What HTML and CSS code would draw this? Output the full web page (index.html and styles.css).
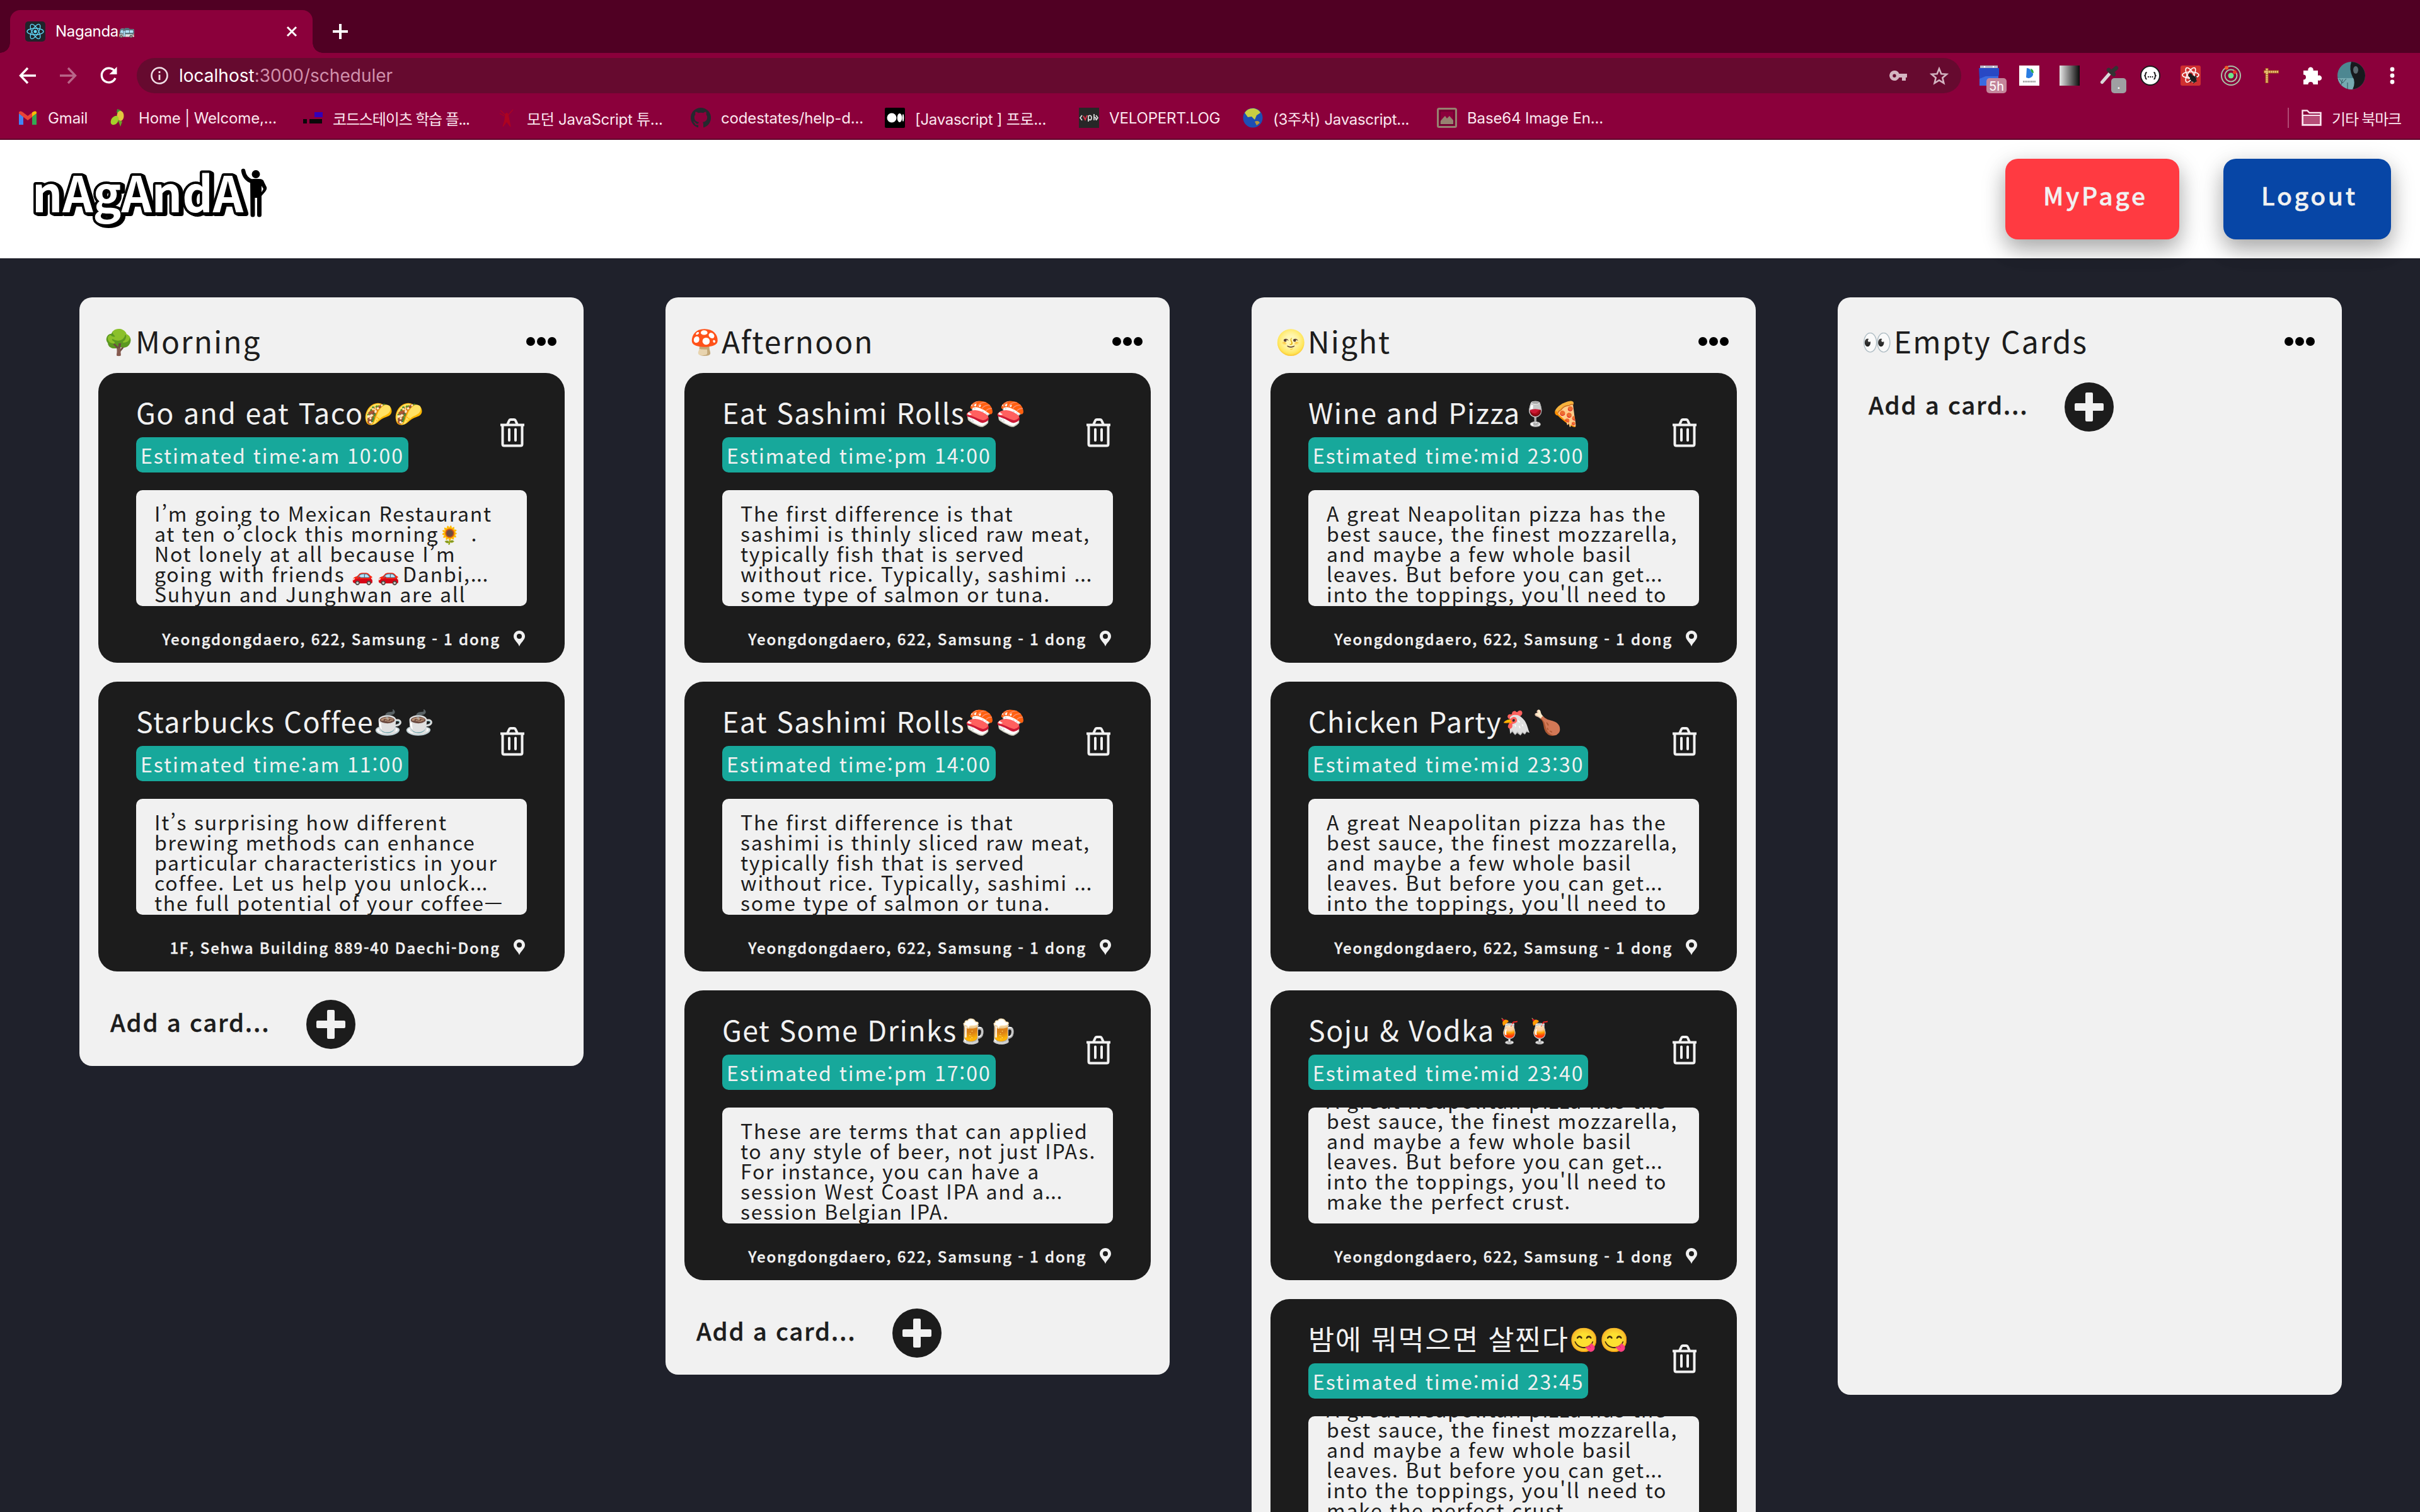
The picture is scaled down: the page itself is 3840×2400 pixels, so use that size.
FILE: index.html
```html
<!DOCTYPE html>
<html lang="ko">
<head>
<meta charset="utf-8">
<title>Naganda</title>
<link rel="stylesheet" href="styles.css">
</head>
<body>
<svg class="defs" width="0" height="0" aria-hidden="true">
  <symbol id="trash" viewBox="0 0 40 46">
    <path d="M1 10.500H39M12 10 15 3.500Q15.600 2 17 2H23Q24.400 2 25 3.500L28 10" fill="none" stroke="currentColor" stroke-width="4"/>
    <path d="M4.500 11V41Q4.500 43.500 7 43.500H33Q35.500 43.500 35.500 41V11M15 17.500V35M25 17.500V35" fill="none" stroke="currentColor" stroke-width="4" stroke-linecap="round"/>
  </symbol>
  <symbol id="pin" viewBox="0 0 18 25">
    <path fill="currentColor" fill-rule="evenodd" d="M9 0C4 0 0 4 0 9c0 6 7 10 9 16 2-6 9-10 9-16 0-5-4-9-9-9Zm0 5a4 4 0 1 1 0 8 4 4 0 0 1 0-8Z"/>
  </symbol>
  <symbol id="dots" viewBox="0 0 48 14">
    <circle cx="7" cy="7" r="7"/><circle cx="24" cy="7" r="7"/><circle cx="41" cy="7" r="7"/>
  </symbol>
  <symbol id="plus" viewBox="0 0 78 78">
    <circle cx="39" cy="39" r="39" fill="#1c1c1c"/>
    <path d="M35 16h8q2 0 2 2v15h15q2 0 2 2v8q0 2-2 2H45v15q0 2-2 2h-8q-2 0-2-2V45H18q-2 0-2-2v-8q0-2 2-2h15V18q0-2 2-2Z" fill="#f1f1f1"/>
  </symbol>
</svg>

<div class="tabstrip">
  <div class="tab">
    <svg class="tab-icon" viewBox="0 0 32 32"><rect width="32" height="32" rx="5" fill="#20232a"/><g fill="none" stroke="#61dafb" stroke-width="1.300"><ellipse cx="16" cy="16" rx="13" ry="5"/><ellipse cx="16" cy="16" rx="13" ry="5" transform="rotate(60 16 16)"/><ellipse cx="16" cy="16" rx="13" ry="5" transform="rotate(120 16 16)"/></g><circle cx="16" cy="16" r="2.500" fill="#61dafb"/></svg>
    <span class="tab-title">Naganda<span class="tab-emoji">🚌</span></span>
    <svg class="tab-close" viewBox="0 0 18 18"><path d="M2 2 16 16M16 2 2 16" stroke="#fff" stroke-width="3"/></svg>
  </div>
  <svg class="tab-new" viewBox="0 0 24 24"><path d="M12 0V24M0 12H24" stroke="#fff" stroke-width="4"/></svg>
</div>

<div class="toolbar">
  <svg class="nav" viewBox="0 0 28 28"><path d="M27 14H3M14 2 2.500 14 14 26" fill="none" stroke="#fff" stroke-width="3.400"/></svg>
  <svg class="nav nav-off" viewBox="0 0 28 28"><path d="M1 14H25M14 2 25.500 14 14 26" fill="none" stroke="#fff" stroke-width="3.400"/></svg>
  <svg class="nav" viewBox="0 0 28 28"><path d="M23.500 6.500A11.300 11.300 0 1 0 25 18" fill="none" stroke="#fff" stroke-width="3.400"/><path d="M27.500 0V12H15.500Z" fill="#fff"/></svg>
  <div class="omnibox">
    <svg class="info" viewBox="0 0 28 28"><circle cx="14" cy="14" r="12.500" fill="none" stroke="#f0dfe6" stroke-width="2.600"/><path d="M14 12.500V21M14 7V10" stroke="#f0dfe6" stroke-width="2.800"/></svg>
    <span class="url"><b>localhost</b>:3000/scheduler</span>
    <svg class="key" viewBox="0 0 28 18"><path fill="#d3b5c1" fill-rule="evenodd" d="M8 1a8 8 0 1 0 7.500 11H20v5h6v-5h2V6H15.500A8 8 0 0 0 8 1Zm0 5.500a2.700 2.700 0 1 1 0 5.400 2.700 2.700 0 0 1 0-5.400Z"/></svg>
    <svg class="star" viewBox="0 0 30 29"><path d="M15 3 18.300 11.200 27 11.800 20.300 17.500 22.400 26 15 21.400 7.600 26 9.700 17.500 3 11.800 11.700 11.200Z" fill="none" stroke="#d3b5c1" stroke-width="2.600"/></svg>
  </div>
  <div class="extensions">
    <div class="ext"><svg viewBox="0 0 32 32"><path d="M1 32V4h30v28Z" fill="#3a6ae0"/><path d="M0 4h32v10q0 3-3 3H11L1 21Z" fill="#2848c4"/><path d="M2 0h28v4H2Z" fill="#b7bac8"/><circle cx="9" cy="2" r="1.200" fill="#fff"/><circle cx="23" cy="2" r="1.200" fill="#fff"/></svg><span class="badge">5h</span></div>
    <div class="ext"><svg viewBox="0 0 32 32"><path d="M0 0h32v32H0Z" fill="#fff"/><path d="M12 4q6 0 7 6 5 2 2 7-4 5-10 2Z" fill="#2a7de1"/><path d="M18 5q5 1 5 7-5 0-5-7Z" fill="#2bab45"/><path d="M6 25.500H26" stroke="#9a9a9a" stroke-width="2.500" stroke-dasharray="2 .6"/></svg></div>
    <div class="ext ext-gradient"></div>
    <div class="ext"><svg viewBox="0 0 32 32"><path d="M3.500 26.500 17 11" stroke="#d9d9d9" stroke-width="5" stroke-linecap="round"/><path d="M14 7 22 14M19 10 26 4" stroke="#333" stroke-width="6.500" stroke-linecap="round"/></svg><span class="badge badge-dot">.</span></div>
    <div class="ext"><svg viewBox="0 0 32 32"><circle cx="16" cy="16" r="15" fill="#fff" stroke="#1c1c1c" stroke-width="2"/><path d="M10.500 11Q8.500 11 8.500 13.500T6.500 16.200Q8.500 16.500 8.500 19T10.500 21.500M21.500 11Q23.500 11 23.500 13.500T25.500 16.200Q23.500 16.500 23.500 19T21.500 21.500" fill="none" stroke="#111" stroke-width="1.800"/><path d="M12 18H20.500" stroke="#111" stroke-width="1.800" stroke-dasharray="1.800 1.500"/></svg></div>
    <div class="ext"><svg viewBox="0 0 32 32"><rect width="32" height="32" rx="3" fill="#cf3030"/><g fill="none" stroke="#fff" stroke-width="1.600"><ellipse cx="16" cy="15" rx="13" ry="5"/><ellipse cx="16" cy="15" rx="13" ry="5" transform="rotate(60 16 15)"/><ellipse cx="16" cy="15" rx="13" ry="5" transform="rotate(120 16 15)"/></g><ellipse cx="20" cy="21" rx="4.500" ry="6" fill="#1c1c1c" transform="rotate(-35 20 21)"/><circle cx="15.500" cy="15.500" r="3" fill="#1c1c1c"/><path d="M14 22 26 19M15 27 25 16M20 28 26 24" stroke="#1c1c1c" stroke-width="1.500"/></svg></div>
    <div class="ext"><svg viewBox="0 0 32 32"><g fill="none" stroke="#a9c3a8" stroke-width="2"><circle cx="16" cy="16" r="15"/><circle cx="16" cy="16" r="9.500"/></g><circle cx="16" cy="16" r="4.500" fill="#6ee787"/><circle cx="9" cy="3.500" r="3" fill="#f0592a"/><circle cx="22" cy="10.500" r="3" fill="#e8382b"/></svg></div>
    <div class="ext"><svg viewBox="0 0 32 32"><path d="M9 4V28M4 10H28" stroke="#a85a1c" stroke-width="5"/><path d="M9 5V27M5 10H27" stroke="#eac67a" stroke-width="3" stroke-dasharray="2.500 .8"/></svg></div>
    <div class="ext"><svg viewBox="0 0 32 32"><path fill="#fff" d="M3 8h7.500a4.200 4.200 0 1 1 8 0H26v8a4.200 4.200 0 1 1 0 7.500V30h-7.500a4 4 0 0 0-8 0H3v-7.500a4 4 0 0 0 0-8Z"/></svg></div>
    <svg class="avatar" viewBox="0 0 44 44"><clipPath id="av"><circle cx="22" cy="22" r="22"/></clipPath><g clip-path="url(#av)"><path d="M0 0H44V44H0Z" fill="#4d8791"/><path d="M0 26H26V44H0Z" fill="#76aab1"/><path d="M22 0H44V44H24Q30 32 24 24 18 12 22 0Z" fill="#17191d"/><ellipse cx="29" cy="13" rx="4" ry="6" fill="#596a70"/><path d="M4 44 8 28M8 34 3 27M8 34 14 27M16 44V33" stroke="#2f555d"/></g></svg>
    <svg class="more" viewBox="0 0 8 28"><g fill="#fff"><circle cx="4" cy="4" r="3.400"/><circle cx="4" cy="14" r="3.400"/><circle cx="4" cy="24" r="3.400"/></g></svg>
  </div>
</div>

<div class="bookmarks">
  <div class="bm bm-short"><svg viewBox="0 0 32 32"><path d="M2 27V9L9 14V27Z" fill="#4285f4"/><path d="M30 27V9L23 14V27Z" fill="#34a853"/><path d="M2 9V7Q4 4 8 7L16 13 24 7V14L16 20 8 14Z" fill="#ea4335"/><path d="M23 14V7.500Q28 4 30 7V9Z" fill="#fbbc04"/></svg><span>Gmail</span></div>
  <div class="bm"><svg viewBox="0 0 32 32"><path d="M14 2 20 4 18 10 13 8Z" fill="#3e9b2f"/><ellipse cx="19" cy="13" rx="5.500" ry="8" fill="#e2c53e"/><ellipse cx="10" cy="20" rx="5.500" ry="8" fill="#a5d02a" transform="rotate(35 10 20)"/><path d="M15 19 22 22 19 30Z" fill="#69a528"/></svg><span>Home | Welcome,...</span></div>
  <div class="bm bm-ko"><svg viewBox="0 0 32 32"><path d="M1 18h6v7H1ZM11 18h20v7H11Z" fill="#090909"/><path d="M19 7h13v8H19Z" fill="#3400b8"/></svg><span>코드스테이츠 학습 플...</span></div>
  <div class="bm bm-ko2"><svg viewBox="0 0 32 32"><path d="M6 4 13 11M26 3 19 11M5 9 12 13M14 10Q16 7 18 10L20 20 22 30 16 22 10 30 13 20Z" fill="#ad0321" stroke="#ad0321" stroke-width="1.200"/></svg><span>모던 JavaScript 튜...</span></div>
  <div class="bm"><svg viewBox="0 0 32 32"><path fill="#24292e" d="M16 0a16 16 0 0 0-5 31.200c.8.100 1.100-.4 1.100-.8v-3c-4.500 1-5.400-1.900-5.400-1.900-.7-1.900-1.800-2.400-1.800-2.400-1.400-1 .1-1 .1-1 1.700.1 2.500 1.700 2.500 1.700 1.400 2.400 3.700 1.700 4.600 1.300.2-1 .6-1.700 1-2.100-3.500-.4-7.300-1.800-7.300-7.900 0-1.700.6-3.200 1.700-4.300-.2-.4-.7-2 .1-4.200 0 0 1.300-.4 4.400 1.600a15 15 0 0 1 8 0c3-2 4.400-1.600 4.400-1.600.8 2.200.3 3.800.1 4.200 1 1.100 1.700 2.600 1.700 4.300 0 6.100-3.800 7.500-7.300 7.900.6.500 1.100 1.500 1.100 3v4.400c0 .4.300.9 1.100.8A16 16 0 0 0 16 0Z"/></svg><span>codestates/help-d...</span></div>
  <div class="bm bm-ko3"><svg viewBox="0 0 32 32"><rect width="32" height="32" rx="2"/><circle cx="11" cy="16" r="7.500" fill="#fff"/><ellipse cx="23.500" cy="16" rx="3.800" ry="7" fill="#fff"/><ellipse cx="29" cy="16" rx="1.300" ry="6" fill="#fff"/></svg><span>[Javascript ] 프로...</span></div>
  <div class="bm bm-velo"><svg viewBox="0 0 32 32"><path d="M0 0h32v32H0Z" fill="#272727"/><g fill="none" stroke="#ddd" stroke-width="1.800"><path d="M5 12 2 16 5 20M15 22V13Q20 11 20 16T15 18.500M27 12 30 16 27 20M24 10V20M24 16Q27 14 27 19"/><path d="M7 13 10 19 13 12" stroke="#e0304a"/></g></svg><span>VELOPERT.LOG</span></div>
  <div class="bm bm-ko3"><svg viewBox="0 0 32 32"><circle cx="16" cy="16" r="15.500" fill="#1d4fb4"/><path d="M3 8Q8 0 18 1 26 3 28 8L22 12 19 19 14 14 8 15Z" fill="#c8cf42"/><path d="M19 22Q25 19 27 24L22 28Z" fill="#b9973b"/></svg><span>(3주차) Javascript...</span></div>
  <div class="bm"><svg viewBox="0 0 32 32"><rect x="1.500" y="1.500" width="29" height="29" rx="2" fill="none" stroke="#968270" stroke-width="3"/><path d="M5 26V22L10 16 13 13 16 17 20 13 26 20V26Z" fill="#968270"/><path d="M5 5H27V27H5Z" fill="none" stroke="#670030" stroke-width="1.500"/></svg><span>Base64 Image En...</span></div>
  <div class="bm-other"><svg viewBox="0 0 32 26"><path d="M1.500 24.500V1.500H9L12.500 5H30.500V24.500Z" fill="none" stroke="#fbe6ef" stroke-width="2.400"/><path d="M2 9H30V24H2Z" fill="#b64d77" stroke="#fbe6ef" stroke-width="2"/></svg><span>기타 북마크</span></div>
</div>

<header class="header">
  <svg class="logo" viewBox="50 262 390 110" role="img">
    <text class="logo-text" x="51" y="337" textLength="335" lengthAdjust="spacingAndGlyphs">nAgAndA</text>
    <circle cx="406" cy="276.500" r="6.500"/>
    <path d="M386 271Q388 284 400 288" fill="none" stroke="#000" stroke-width="6.500" stroke-linecap="round"/>
    <path d="M397 288Q397 284 402 284H411Q418 284 419 289L423 297Q424 300 421 304L415 311V341Q415 344.500 411.500 344.500T408 341V314H404.500V341Q404.500 344.500 401 344.500T397.500 341Z"/>
    <path d="M415 295 418 300 415 305Z" fill="#fff"/>
  </svg>
  <div class="actions">
    <button class="btn btn-red">MyPage</button>
    <button class="btn btn-blue">Logout</button>
  </div>
</header>

<main class="board">
  <section class="column">
    <div class="column-head"><h2><i>🌳</i>Morning</h2><svg class="dots"><use href="#dots"/></svg></div>
    <article class="card">
      <div class="card-head"><div><h3>Go and eat Taco<i>🌮🌮</i></h3><div class="time">Estimated time:am 10:00</div></div><svg class="trash"><use href="#trash"/></svg></div>
      <div class="memo"><p>I’m going to Mexican Restaurant<br>at ten o’clock this morning<i>🌻</i> .<br>Not lonely at all because I’m<br>going with friends <i>🚗🚗</i>Danbi,<s>...</s><br>Suhyun and Junghwan are all</p></div>
      <div class="place">Yeongdongdaero, 622, Samsung - 1 dong<svg class="pin"><use href="#pin"/></svg></div>
    </article>
    <article class="card">
      <div class="card-head"><div><h3>Starbucks Coffee<i>☕️☕️</i></h3><div class="time">Estimated time:am 11:00</div></div><svg class="trash"><use href="#trash"/></svg></div>
      <div class="memo"><p>It’s surprising how different<br>brewing methods can enhance<br>particular characteristics in your<br>coffee. Let us help you unlock<s>...</s><br>the full potential of your coffee—</p></div>
      <div class="place">1F, Sehwa Building 889-40 Daechi-Dong<svg class="pin"><use href="#pin"/></svg></div>
    </article>
    <div class="add">Add a card...<svg><use href="#plus"/></svg></div>
  </section>

  <section class="column">
    <div class="column-head"><h2><i>🍄</i>Afternoon</h2><svg class="dots"><use href="#dots"/></svg></div>
    <article class="card">
      <div class="card-head"><div><h3>Eat Sashimi Rolls<i>🍣🍣</i></h3><div class="time">Estimated time:pm 14:00</div></div><svg class="trash"><use href="#trash"/></svg></div>
      <div class="memo"><p>The first difference is that<br>sashimi is thinly sliced raw meat,<br>typically fish that is served<br>without rice. Typically, sashimi <s>...</s><br>some type of salmon or tuna.</p></div>
      <div class="place">Yeongdongdaero, 622, Samsung - 1 dong<svg class="pin"><use href="#pin"/></svg></div>
    </article>
    <article class="card">
      <div class="card-head"><div><h3>Eat Sashimi Rolls<i>🍣🍣</i></h3><div class="time">Estimated time:pm 14:00</div></div><svg class="trash"><use href="#trash"/></svg></div>
      <div class="memo"><p>The first difference is that<br>sashimi is thinly sliced raw meat,<br>typically fish that is served<br>without rice. Typically, sashimi <s>...</s><br>some type of salmon or tuna.</p></div>
      <div class="place">Yeongdongdaero, 622, Samsung - 1 dong<svg class="pin"><use href="#pin"/></svg></div>
    </article>
    <article class="card">
      <div class="card-head"><div><h3>Get Some Drinks<i>🍺🍺</i></h3><div class="time">Estimated time:pm 17:00</div></div><svg class="trash"><use href="#trash"/></svg></div>
      <div class="memo"><p>These are terms that can applied<br>to any style of beer, not just IPAs.<br>For instance, you can have a<br>session West Coast IPA and a<s>...</s><br>session Belgian IPA.</p></div>
      <div class="place">Yeongdongdaero, 622, Samsung - 1 dong<svg class="pin"><use href="#pin"/></svg></div>
    </article>
    <div class="add">Add a card...<svg><use href="#plus"/></svg></div>
  </section>

  <section class="column column-night">
    <div class="column-head"><h2><i>🌝</i>Night</h2><svg class="dots"><use href="#dots"/></svg></div>
    <article class="card">
      <div class="card-head"><div><h3>Wine and Pizza<i>🍷🍕</i></h3><div class="time">Estimated time:mid 23:00</div></div><svg class="trash"><use href="#trash"/></svg></div>
      <div class="memo"><p>A great Neapolitan pizza has the<br>best sauce, the finest mozzarella,<br>and maybe a few whole basil<br>leaves. But before you can get<s>...</s><br>into the toppings, you'll need to<br>make the perfect crust.</p></div>
      <div class="place">Yeongdongdaero, 622, Samsung - 1 dong<svg class="pin"><use href="#pin"/></svg></div>
    </article>
    <article class="card">
      <div class="card-head"><div><h3>Chicken Party<i>🐔🍗</i></h3><div class="time">Estimated time:mid 23:30</div></div><svg class="trash"><use href="#trash"/></svg></div>
      <div class="memo"><p>A great Neapolitan pizza has the<br>best sauce, the finest mozzarella,<br>and maybe a few whole basil<br>leaves. But before you can get<s>...</s><br>into the toppings, you'll need to<br>make the perfect crust.</p></div>
      <div class="place">Yeongdongdaero, 622, Samsung - 1 dong<svg class="pin"><use href="#pin"/></svg></div>
    </article>
    <article class="card">
      <div class="card-head"><div><h3>Soju &amp; Vodka<i>🍹🍹</i></h3><div class="time">Estimated time:mid 23:40</div></div><svg class="trash"><use href="#trash"/></svg></div>
      <div class="memo memo-end"><p>A great Neapolitan pizza has the<br>best sauce, the finest mozzarella,<br>and maybe a few whole basil<br>leaves. But before you can get<s>...</s><br>into the toppings, you'll need to<br>make the perfect crust.</p></div>
      <div class="place">Yeongdongdaero, 622, Samsung - 1 dong<svg class="pin"><use href="#pin"/></svg></div>
    </article>
    <article class="card card-cut">
      <div class="card-head"><div><h3 class="ko">밤에 뭐먹으면 살찐다<i>😋😋</i></h3><div class="time">Estimated time:mid 23:45</div></div><svg class="trash"><use href="#trash"/></svg></div>
      <div class="memo memo-end"><p>A great Neapolitan pizza has the<br>best sauce, the finest mozzarella,<br>and maybe a few whole basil<br>leaves. But before you can get<s>...</s><br>into the toppings, you'll need to<br>make the perfect crust.</p></div>
    </article>
  </section>

  <section class="column column-empty">
    <div class="column-head"><h2><i>👀</i>Empty Cards</h2><svg class="dots"><use href="#dots"/></svg></div>
    <div class="add">Add a card...<svg><use href="#plus"/></svg></div>
  </section>
</main>
</body>
</html>
```
FILE: styles.css
```css
* { box-sizing: border-box; }
html, body { margin: 0; height: 2400px; overflow: hidden; }
body {
  display: flex;
  flex-direction: column;
  background: #1f212b;
  font-family: "Noto Sans CJK KR", "Noto Sans CJK SC", sans-serif;
}
i, s { font-style: normal; text-decoration: none; }
svg { display: block; flex: none; }
.defs { position: absolute; }

/* browser window */
.tabstrip, .toolbar, .bookmarks {
  display: flex;
  align-items: center;
  flex: none;
  font-family: Inter, "Noto Sans CJK KR", sans-serif;
  color: #fff;
}
.tabstrip { height: 84px; padding-left: 16px; background: #500023; }
.tab {
  position: relative;
  display: flex;
  align-items: center;
  align-self: flex-end;
  width: 480px;
  height: 68px;
  padding: 0 24px;
  border-radius: 16px 16px 0 0;
  background: #8b003b;
}
.tab::before, .tab::after {
  content: "";
  position: absolute;
  bottom: 0;
  width: 16px;
  height: 16px;
}
.tab::before { left: -16px; background: radial-gradient(circle at 0 0, transparent 15.5px, #8b003b 16px); }
.tab::after { right: -16px; background: radial-gradient(circle at 100% 0, transparent 15.5px, #8b003b 16px); }
.tab-icon { width: 32px; height: 32px; }
.tab-title { flex: 1; margin-left: 16px; font-size: 24px; line-height: 32px; letter-spacing: -.3px; white-space: nowrap; }
.tab-emoji { font-size: 21px; line-height: 1; vertical-align: 2px; }
.tab-close { width: 18px; height: 18px; }
.tab-new { width: 24px; height: 24px; margin: 16px 0 0 32px; }

.toolbar { height: 72px; padding: 0 40px 0 30px; background: #8b003b; }
.nav { width: 28px; height: 28px; margin-right: 36px; }
.nav-off { opacity: .4; }
.omnibox {
  display: flex;
  align-items: center;
  width: 2895px;
  height: 56px;
  margin-left: -5px;
  padding: 0 20px 0 22px;
  border-radius: 28px;
  background: #660a2f;
}
.info { width: 28px; height: 28px; }
.url { flex: 1; margin-left: 17px; font-size: 28px; color: #d090ab; }
.url b { font-weight: 400; color: #fff; }
.key { width: 28px; height: 18px; margin-right: 36px; }
.star { width: 30px; height: 29px; }
.extensions { display: flex; align-items: center; gap: 32px; margin-left: 28px; }
.ext { position: relative; width: 32px; height: 32px; }
.ext-gradient { background: linear-gradient(90deg, #e8e8e8, #0a0a0a); }
.badge {
  position: absolute;
  left: 12px;
  top: 20px;
  width: 32px;
  height: 24px;
  border-radius: 5px;
  background: #c4869b;
  font: 20px/26px Inter, sans-serif;
  text-align: center;
}
.badge-dot { left: 18px; width: 24px; background: #9f9fa2; line-height: 20px; }
.avatar { width: 44px; height: 44px; margin-left: -7px; }
.more { width: 8px; height: 28px; margin-left: 7px; }

.bookmarks {
  height: 66px;
  padding: 0 30px 2px 28px;
  border-bottom: 2px solid #5c0028;
  background: #8b003b;
  font-size: 24px;
  color: #fbe6ef;
}
.bm { display: flex; gap: 16px; align-items: center; width: 308px; white-space: nowrap; letter-spacing: -.15px; }
.bm svg { width: 32px; height: 32px; }
.bm-short { width: 144px; }
.bm-velo { width: 260px; }
.bm-ko { letter-spacing: -1.15px; }
.bm-ko2, .bm-ko3 { letter-spacing: -.3px; }
.bm-other {
  display: flex;
  align-items: center;
  gap: 16px;
  height: 32px;
  margin-left: auto;
  padding-left: 20px;
  border-left: 2px solid #b04a74;
  letter-spacing: -1.2px;
}
.bm-other svg { width: 32px; height: 26px; }

/* app header */
.header {
  display: flex;
  align-items: flex-start;
  justify-content: space-between;
  flex: none;
  height: 188px;
  padding: 30px 46px 0 50px;
  background: #fff;
}
.logo { width: 390px; height: 110px; margin-top: 10px; overflow: visible; }
.logo-text {
  font-size: 78px;
  font-weight: 700;
  fill: #fff;
  stroke: #000;
  stroke-width: 8px;
  stroke-linejoin: round;
  paint-order: stroke;
  filter: drop-shadow(2px 1.5px 0 #000) drop-shadow(2px 1.5px 0 #000);
}
.actions { display: flex; gap: 70px; }
.btn {
  width: 276px;
  height: 128px;
  padding: 0 0 14px 60px;
  border: 0;
  border-radius: 20px;
  box-shadow: 0 16px 32px rgba(0, 0, 0, .2), 0 12px 40px rgba(0, 0, 0, .19);
  color: #f1f1f1;
  font: 500 39px/56px "Noto Sans CJK KR", sans-serif;
  letter-spacing: 3.7px;
  text-align: left;
  -webkit-text-stroke: .5px;
}
.btn-red { background: #ff3a41; }
.btn-blue { width: 266px; background: #0746a6; }

/* board */
.board { display: flex; align-items: flex-start; gap: 130px; height: 1990px; padding: 62px 126px 0; }
.column {
  display: flex;
  flex-direction: column;
  flex: none;
  gap: 30px;
  width: 800px;
  padding: 34px 30px 0;
  border-radius: 20px;
  background: #f1f1f1;
  color: #1c1c1c;
}
.column-night { height: 1928px; border-radius: 20px 20px 0 0; }
.column-empty { height: 1742px; }
.column-head {
  display: flex;
  justify-content: space-between;
  height: 70px;
  margin-bottom: -14px;
  padding: 0 13px 0 8px;
}
.column-head h2 { margin: 0; font-size: 48px; font-weight: 400; line-height: 69px; letter-spacing: 2px; white-space: nowrap; }
.column-head i { font-size: 39px; line-height: 1; vertical-align: 4px; }
.dots { width: 48px; height: 14px; margin-top: 29px; }

.card {
  flex: none;
  height: 460px;
  padding: 30px 60px 0;
  border-radius: 30px;
  background: #1c1c1c;
  color: #f1f1f1;
}
.card-cut { height: 338px; border-radius: 30px 30px 0 0; }
.card-cut .memo { height: 152px; border-radius: 10px 10px 0 0; }
.card-head { display: flex; justify-content: space-between; height: 128px; padding-right: 3px; }
.card-head h3 { margin: 0 0 8px; font-size: 44.8px; font-weight: 400; line-height: 64px; letter-spacing: 1.45px; white-space: nowrap; }
.card-head h3.ko { letter-spacing: 1.6px; }
.card-head h3 i { font-size: 37.5px; line-height: 1; vertical-align: 3px; }
.time {
  width: fit-content;
  height: 56px;
  padding: 5px 7px;
  border-radius: 10px;
  background: #17a89b;
  font-size: 32px;
  font-variant-ligatures: none;
  line-height: 46px;
  letter-spacing: 1.95px;
  white-space: nowrap;
}
.trash { width: 40px; height: 46px; margin-top: 42px; }
.memo {
  height: 184px;
  margin-top: 28px;
  padding: 20px 0 0 29px;
  border-radius: 10px;
  overflow: hidden;
  background: #f1f1f1;
  color: #1c1c1c;
}
.memo p { margin: 0; font-size: 32px; line-height: 32px; letter-spacing: 1.75px; white-space: nowrap; }
.memo-end p { margin-top: -48px; }
.memo i { font-size: 28px; line-height: 1; letter-spacing: 5.5px; vertical-align: 1px; }
.memo s { letter-spacing: .5px; }
.place {
  display: flex;
  justify-content: flex-end;
  gap: 21px;
  margin-top: 34px;
  padding-right: 3px;
  font-size: 24px;
  font-weight: 500;
  line-height: 35px;
  letter-spacing: 1.8px;
  white-space: nowrap;
  -webkit-text-stroke: .4px;
}
.pin { width: 18px; height: 25px; margin-top: 5px; }

.add {
  display: flex;
  align-items: flex-start;
  gap: 58px;
  height: 120px;
  padding: 15px 0 0 19px;
  font-size: 38.4px;
  font-weight: 500;
  line-height: 68px;
  letter-spacing: 1.7px;
  white-space: nowrap;
  -webkit-text-stroke: .4px;
}
.add svg { width: 78px; height: 78px; }
```
